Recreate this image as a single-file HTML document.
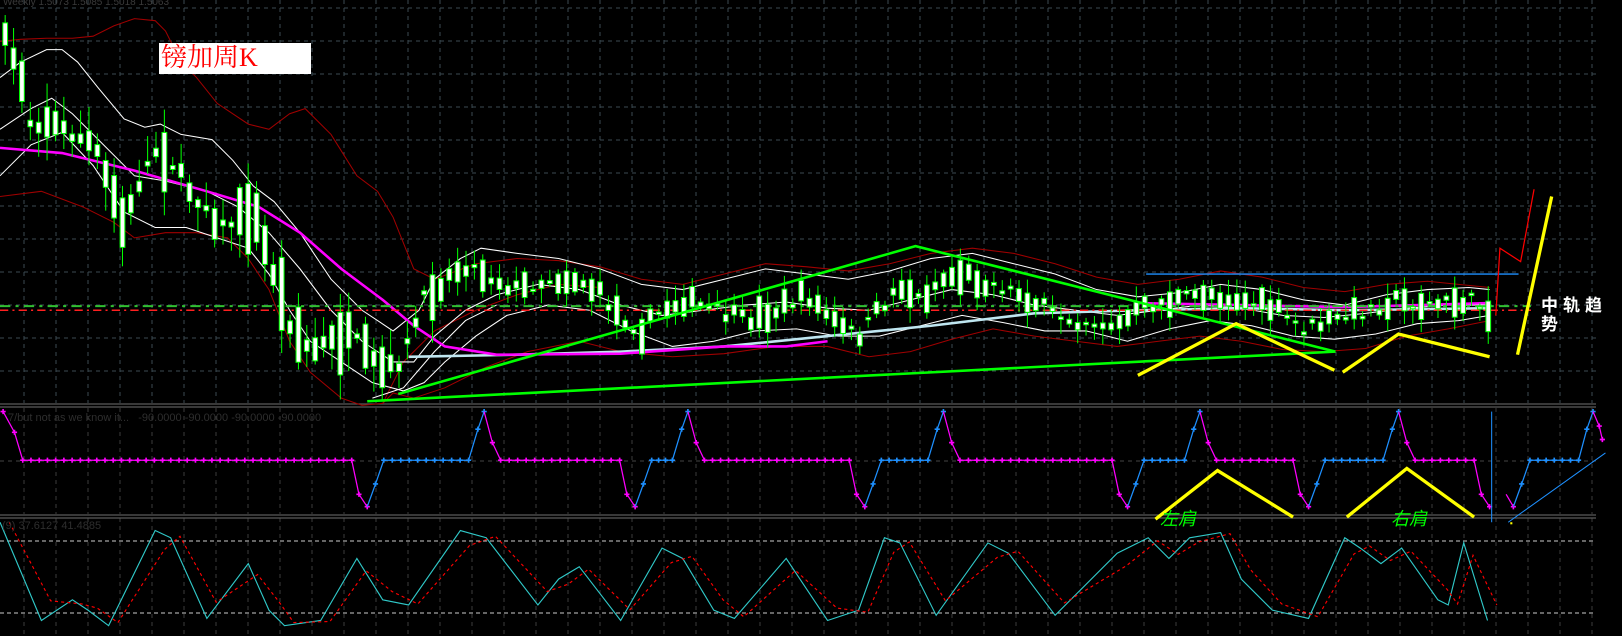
<!DOCTYPE html>
<html><head><meta charset="utf-8">
<style>
html,body{margin:0;padding:0;background:#000;width:1622px;height:636px;overflow:hidden}
svg{position:absolute;left:0;top:0}
.t{position:absolute;white-space:nowrap}
</style></head>
<body>
<svg id="g" width="1622" height="636"></svg>
<svg id="d" width="1622" height="636" viewBox="0 0 1568 615" preserveAspectRatio="none"></svg>
<div class="t" style="left:3px;top:-3px;font:10px 'Liberation Sans',sans-serif;color:#3a3a3a">Weekly 1.5073 1.5085 1.5018 1.5063</div>
<div class="t" style="left:8px;top:412px;font:11px 'Liberation Sans',sans-serif;color:#2e2e2e">7/but not as we know it...&nbsp;&nbsp; -90.0000 -90.0000 -90.0000 -90.0000</div>
<div class="t" style="left:2px;top:520px;font:11px 'Liberation Sans',sans-serif;color:#2e2e2e">(9) 37.6127 41.4885</div>
<div class="t" style="left:159px;top:43px;width:152px;height:31px;background:#fff;"></div>
<div class="t" style="left:161px;top:42px;font:26px 'Liberation Serif','Noto Serif CJK SC',serif;color:#ff0000;line-height:32px">镑加周K</div>
<div class="t" style="left:1160px;top:505px;font:italic 18px 'Liberation Sans','Noto Sans CJK SC',sans-serif;color:#00ff00">左肩</div>
<div class="t" style="left:1391px;top:505px;font:italic 18px 'Liberation Sans','Noto Sans CJK SC',sans-serif;color:#00ff00">右肩</div>
<div class="t" style="left:1541px;top:296px;font:bold 17px 'Liberation Sans','Noto Sans CJK SC',sans-serif;color:#fff;line-height:19px;letter-spacing:5px">中轨趋<br>势</div>
<script>
const NS="http://www.w3.org/2000/svg";
function el(p,n,a){const e=document.createElementNS(NS,n);for(const k in a)e.setAttribute(k,a[k]);p.appendChild(e);return e}
const g=document.getElementById('g'),d=document.getElementById('d');
for(let x=24;x<=1596;x+=32){
 el(g,'line',{x1:x,y1:0,x2:x,y2:403,stroke:'#3b4a52','stroke-dasharray':'4 4'});
 el(g,'line',{x1:x,y1:408,x2:x,y2:514,stroke:'#3b3b3b','stroke-dasharray':'4 4'});
 el(g,'line',{x1:x,y1:518,x2:x,y2:636,stroke:'#3b3b3b','stroke-dasharray':'4 4'});
}
for(let y=8;y<=372;y+=33)el(g,'line',{x1:0,y1:y,x2:1596,y2:y,stroke:'#3b4a52','stroke-dasharray':'4 4'});
el(g,'line',{x1:0,y1:461,x2:1596,y2:461,stroke:'#444','stroke-dasharray':'4 4'});
el(g,'line',{x1:0,y1:541,x2:1596,y2:541,stroke:'#ccc','stroke-dasharray':'4 3'});
el(g,'line',{x1:0,y1:613,x2:1596,y2:613,stroke:'#ccc','stroke-dasharray':'4 3'});
[404,407,515,518].forEach(y=>el(g,'line',{x1:0,y1:y,x2:1596,y2:y,stroke:'#5a5a5a','stroke-width':1.2}));
function pl(pts,a){el(d,'polyline',Object.assign({points:pts.map(p=>p.join(',')).join(' '),fill:'none'},a))}
function P(s){const a=s.trim().split(/\s+/).map(Number),r=[];for(let i=0;i<a.length;i+=2)r.push([a[i],a[i+1]]);return r}
pl(P(`0 40 20 38 45 37 70 37 90 35 110 25 130 18 150 20 160 30 175 60 190 75 210 100 240 120 260 125 280 110 295 105 320 130 345 170 365 185 380 210 400 260 420 270 460 255 500 250 540 252 580 258 620 270 660 275 700 265 740 255 780 258 820 262 860 255 900 245 940 240 980 245 1020 255 1060 268 1100 275 1140 270 1180 262 1220 268 1260 278 1300 282 1340 275 1380 272 1440 278`),{stroke:'#a00000','stroke-width':1});
pl(P(`0 190 40 185 80 200 110 215 130 230 160 225 190 225 220 230 240 250 260 280 280 330 300 360 330 385 350 392 370 390 380 380 400 385 430 375 470 355 510 340 560 330 600 340 650 345 700 342 750 335 800 335 840 345 880 340 920 328 960 318 1000 325 1040 330 1080 335 1120 330 1160 325 1200 330 1240 338 1280 340 1320 337 1360 325 1400 318 1440 310`),{stroke:'#a00000','stroke-width':1});
pl(P(`370 390 390 350 420 320 460 300 500 285 540 275 580 278`),{stroke:'#a00000','stroke-width':1});
pl(P(`0 75 20 60 45 48 60 48 75 60 95 85 120 115 140 123 155 120 175 130 205 135 225 155 245 180 265 195 290 225 320 270 350 300 380 320 405 300 420 270 445 250 465 240 500 245 540 250 580 260 620 275 660 280 700 270 740 260 780 265 820 270 860 262 900 250 940 245 980 255 1020 265 1060 280 1100 287 1140 283 1180 275 1220 280 1260 290 1300 295 1340 285 1380 280 1420 278 1440 280`),{stroke:'#fff','stroke-width':1});
pl(P(`0 170 30 140 60 128 90 160 120 205 150 220 180 220 210 230 240 240 260 265 280 300 300 330 330 350 360 370 390 378 410 370 430 350 460 325 490 305 530 295 570 300 610 320 650 335 690 330 730 320 770 318 810 325 850 325 890 315 930 305 970 312 1010 320 1050 320 1090 330 1130 318 1170 310 1210 315 1250 325 1290 328 1330 323 1370 313 1410 310 1440 305`),{stroke:'#fff','stroke-width':1});
pl(P(`0 125 30 105 50 95 70 110 100 140 130 170 160 175 200 185 230 200 260 225 290 260 320 300 350 330 380 350 400 350 420 325 450 300 480 285 520 275 560 280 600 295 640 305 680 300 720 295 760 292 800 298 840 300 880 290 920 280 960 285 1000 295 1040 300 1080 305 1120 300 1160 295 1200 298 1240 305 1280 307 1320 303 1360 298 1400 295 1440 295`),{stroke:'#fff','stroke-width':1});
pl(P(`360 385 390 375 420 340 450 310 480 295`),{stroke:'#fff','stroke-width':1});
pl(P(`395 345 500 343 600 340 700 335 800 325 900 315 1000 303 1100 300 1200 298 1300 300 1440 298`),{stroke:'#bfe6f0','stroke-width':2.5});
pl(P(`0 143 60 148 130 165 200 185 250 200 290 225 330 260 370 290 400 315 430 335 480 343 600 342 700 335 760 335 800 330`),{stroke:'#ff00ff','stroke-width':2.5});
pl(P(`1100 293 1200 295 1300 297 1440 293`),{stroke:'#ff00ff','stroke-width':2.5});
el(d,'line',{x1:0,y1:296,x2:1480,y2:296,stroke:'#30c030','stroke-width':2,'stroke-dasharray':'10 5 3 5'});
el(d,'line',{x1:0,y1:300,x2:1480,y2:300,stroke:'#ff2020','stroke-width':1.5,'stroke-dasharray':'8 4 2 4'});
let seed=7;function rnd(){seed=(seed*16807)%2147483647;return seed/2147483647}
const path=P(`5 40 20 70 30 120 45 115 60 125 90 140 110 190 120 220 135 175 150 145 165 155 180 180 200 200 215 220 230 210 245 205 260 250 280 310 300 340 320 330 340 325 360 350 375 360 390 345 410 290 430 270 450 255 470 265 500 280 530 270 560 270 580 285 600 305 620 320 640 300 660 290 690 300 720 310 750 300 780 285 810 315 830 325 850 300 870 275 890 290 910 270 930 265 960 275 990 285 1020 305 1050 310 1080 315 1110 295 1140 290 1170 283 1200 290 1230 298 1260 318 1290 310 1320 300 1350 290 1380 295 1420 290 1440 300`);
function ip(x){for(let i=1;i<path.length;i++)if(x<=path[i][0]){const a=path[i-1],b=path[i];return a[1]+(b[1]-a[1])*(x-a[0])/(b[0]-a[0])}return path[path.length-1][1]}
for(let x=5;x<=1440;x+=8.1){
 const big=x<420?1.8:1;
 const c=ip(x)+(rnd()-0.5)*14;const bh=(2+rnd()*rnd()*38)*big;const top=c-bh/2;
 const w1=top-3-rnd()*12*big,w2=top+bh+3+rnd()*12*big;
 el(d,'line',{x1:x,y1:w1,x2:x,y2:w2,stroke:'#00ff00','stroke-width':1});
 el(d,'rect',{x:x-2.3,y:top,width:4.6,height:bh,fill:'#fff',stroke:'#00ff00','stroke-width':1});
}
pl(P(`355 388 1291 340`),{stroke:'#00ff00','stroke-width':2.5});
pl(P(`385 381 885 238 1291 340`),{stroke:'#00ff00','stroke-width':2.5});
pl(P(`1108 265 1468 265`),{stroke:'#1e90ff','stroke-width':1.3});
pl(P(`1446 305 1450 240 1470 253 1483 183`),{stroke:'#ff0000','stroke-width':1.2});
const Y={stroke:'#ffff00','stroke-width':3.2,'stroke-linejoin':'miter'};
pl(P(`1100 363 1195 313 1290 358`),Y);
pl(P(`1298 360 1352 323 1440 345`),Y);
pl(P(`1467 343 1500 190`),Y);
pl(P(`1117 502 1177 455 1250 500`),Y);
pl(P(`1302 500 1360 453 1425 500`),Y);
const M='#ff00ff',B='#1e90ff';
function build(list){for(let i=1;i<list.length;i++){const a=list[i-1],b=list[i];el(d,'line',{x1:a[0],y1:a[1],x2:b[0],y2:b[1],stroke:b[2],'stroke-width':1.2});
 const n=Math.max(1,Math.round(Math.abs(b[0]-a[0])/8));for(let k=1;k<=n;k++){const x=a[0]+(b[0]-a[0])*k/n,y=a[1]+(b[1]-a[1])*k/n;mk(x,y,b[2])}}}
function mk(x,y,c){el(d,'path',{d:`M${x-2.5} ${y}H${x+2.5}M${x} ${y-2.5}V${y+2.5}`,stroke:c,'stroke-width':1.6})}
const peaks=[468,665,912,1160,1352],troughs=[355,614,836,1090,1265,1440];
const L=445,T=398,Bt=490;let s=[[3,T,M],[14,418,M],[22,L,M]];mk(3,T,M);
troughs.forEach((t,i)=>{s.push([t-15,L,M],[t-8,478,M],[t,Bt,M]);if(i<peaks.length){const p=peaks[i];s.push([t+8,468,B],[t+16,L,B],[p-15,L,B],[p-6,415,B],[p,T,B],[p+8,428,M],[p+16,L,M])}});
build(s);
build([[1456,478,M],[1463,Bt,M],[1471,468,B],[1479,L,B],[1526,L,B],[1534,415,B],[1540,T,B],[1546,412,M],[1549,425,M]]);
el(d,'line',{x1:1442,y1:398,x2:1442,y2:505,stroke:'#1e90ff','stroke-width':1});
pl(P(`1458 505 1552 438`),{stroke:'#1e90ff','stroke-width':1});
el(d,'rect',{x:1460,y:505,width:2,height:2,fill:'#ff0'});
const ex=P(`0 505 40 600 70 580 85 590 105 605 150 513 165 520 200 598 240 545 260 590 275 605 310 600 345 540 370 580 395 585 445 513 470 520 520 585 540 560 560 548 600 600 640 530 660 540 690 590 710 598 760 540 800 600 830 590 855 520 870 525 905 595 955 525 975 535 1020 595 1080 535 1110 520 1130 540 1150 520 1180 515 1200 560 1230 590 1265 598 1300 520 1315 530 1335 545 1355 530 1390 580 1400 585 1415 525 1438 600`);
pl(ex,{stroke:'#30c8c8','stroke-width':1.1});
pl(ex.map((p,i)=>[p[0]+9,i?(p[1]*0.8+ex[i-1][1]*0.2):p[1]]),{stroke:'#ff0000','stroke-width':1.1,'stroke-dasharray':'3 3'});
</script>
</body></html>
